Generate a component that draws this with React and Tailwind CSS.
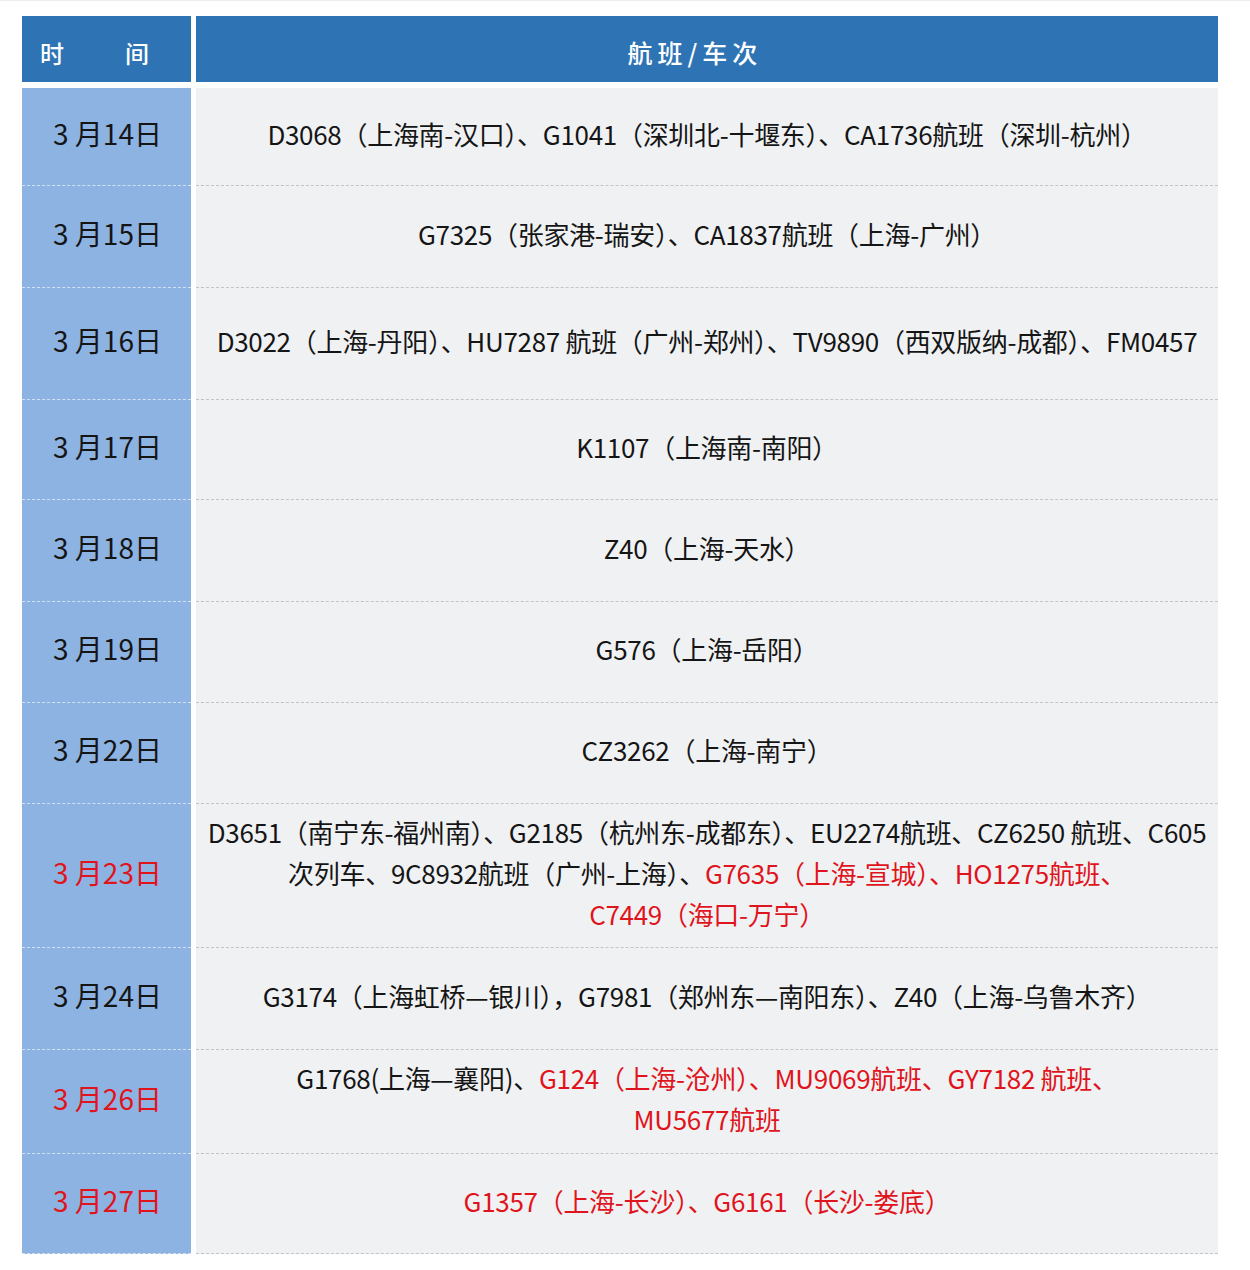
import React from 'react';

const rows = [
  { date: '3 月14日', h: 'h-[98px]', lines: [[['D3068（上海南-汉口）、G1041（深圳北-十堰东）、CA1736航班（深圳-杭州）', 0]]] },
  { date: '3 月15日', h: 'h-[102px]', lines: [[['G7325（张家港-瑞安）、CA1837航班（上海-广州）', 0]]] },
  { date: '3 月16日', h: 'h-[112px]', lines: [[['D3022（上海-丹阳）、HU7287 航班（广州-郑州）、TV9890（西双版纳-成都）、FM0457', 0]]] },
  { date: '3 月17日', h: 'h-[100px]', lines: [[['K1107（上海南-南阳）', 0]]] },
  { date: '3 月18日', h: 'h-[102px]', lines: [[['Z40（上海-天水）', 0]]] },
  { date: '3 月19日', h: 'h-[101px]', lines: [[['G576（上海-岳阳）', 0]]] },
  { date: '3 月22日', h: 'h-[101px]', lines: [[['CZ3262（上海-南宁）', 0]]] },
  {
    date: '3 月23日', red: true, h: 'h-[144px]',
    lines: [
      [['D3651（南宁东-福州南）、G2185（杭州东-成都东）、EU2274航班、CZ6250 航班、C605', 0]],
      [['次列车、9C8932航班（广州-上海）、', 0], ['G7635（上海-宣城）、HO1275航班、', 1]],
      [['C7449（海口-万宁）', 1]],
    ],
  },
  { date: '3 月24日', h: 'h-[102px]', lines: [[['G3174（上海虹桥—银川），G7981（郑州东—南阳东）、Z40（上海-乌鲁木齐）', 0]]] },
  {
    date: '3 月26日', red: true, h: 'h-[104px]',
    lines: [
      [['G1768(上海—襄阳)、', 0], ['G124（上海-沧州）、MU9069航班、GY7182 航班、', 1]],
      [['MU5677航班', 1]],
    ],
  },
  { date: '3 月27日', red: true, h: 'h-[100px]', lines: [[['G1357（上海-长沙）、G6161（长沙-娄底）', 1]]] },
];

export default function App() {
  return (
    <div
      className="w-[1250px] h-[1270px] bg-white overflow-hidden border-t border-[#ececec]"
      style={{ fontFamily: '"Noto Sans CJK SC", "DejaVu Sans", sans-serif' }}
    >
      <div className="ml-[22px] mt-[15px] w-[1196px]">
        <div className="flex gap-[5px] h-[66px]">
          <div className="w-[169px] bg-[#2e74b5] flex items-center pt-[8px] pl-[18px] text-white text-[24px] font-medium">
            <span>时</span>
            <span className="ml-[61px]">间</span>
          </div>
          <div className="flex-1 bg-[#2e74b5] flex items-center justify-center pt-[8px] pr-[24px] text-white text-[25px] font-medium tracking-[5px]">
            航班/车次
          </div>
        </div>

        <div className="mt-[6px]">
          {rows.map((r) => (
            <div key={r.date} className={`flex gap-[5px] ${r.h}`}>
              <div
                className={`w-[169px] bg-[#8db3e2] border-b border-dashed border-[#d3e1f3] flex items-center justify-center pb-[8px] pl-[2px] text-[28px] ${
                  r.red ? 'text-[#e0141c]' : 'text-[#151515]'
                }`}
              >
                {r.date}
              </div>
              <div className="flex-1 bg-[#f0f1f3] border-b border-dashed border-[#c4c4c4] flex flex-col items-center justify-center pb-[7px] text-[26px] leading-[41px] tracking-[-0.3px] whitespace-nowrap">
                {r.lines.map((line, i) => (
                  <div key={i}>
                    {line.map(([t, red], j) => (
                      <span key={j} className={red ? 'text-[#e0141c]' : 'text-[#151515]'}>
                        {t}
                      </span>
                    ))}
                  </div>
                ))}
              </div>
            </div>
          ))}
        </div>
      </div>
    </div>
  );
}
